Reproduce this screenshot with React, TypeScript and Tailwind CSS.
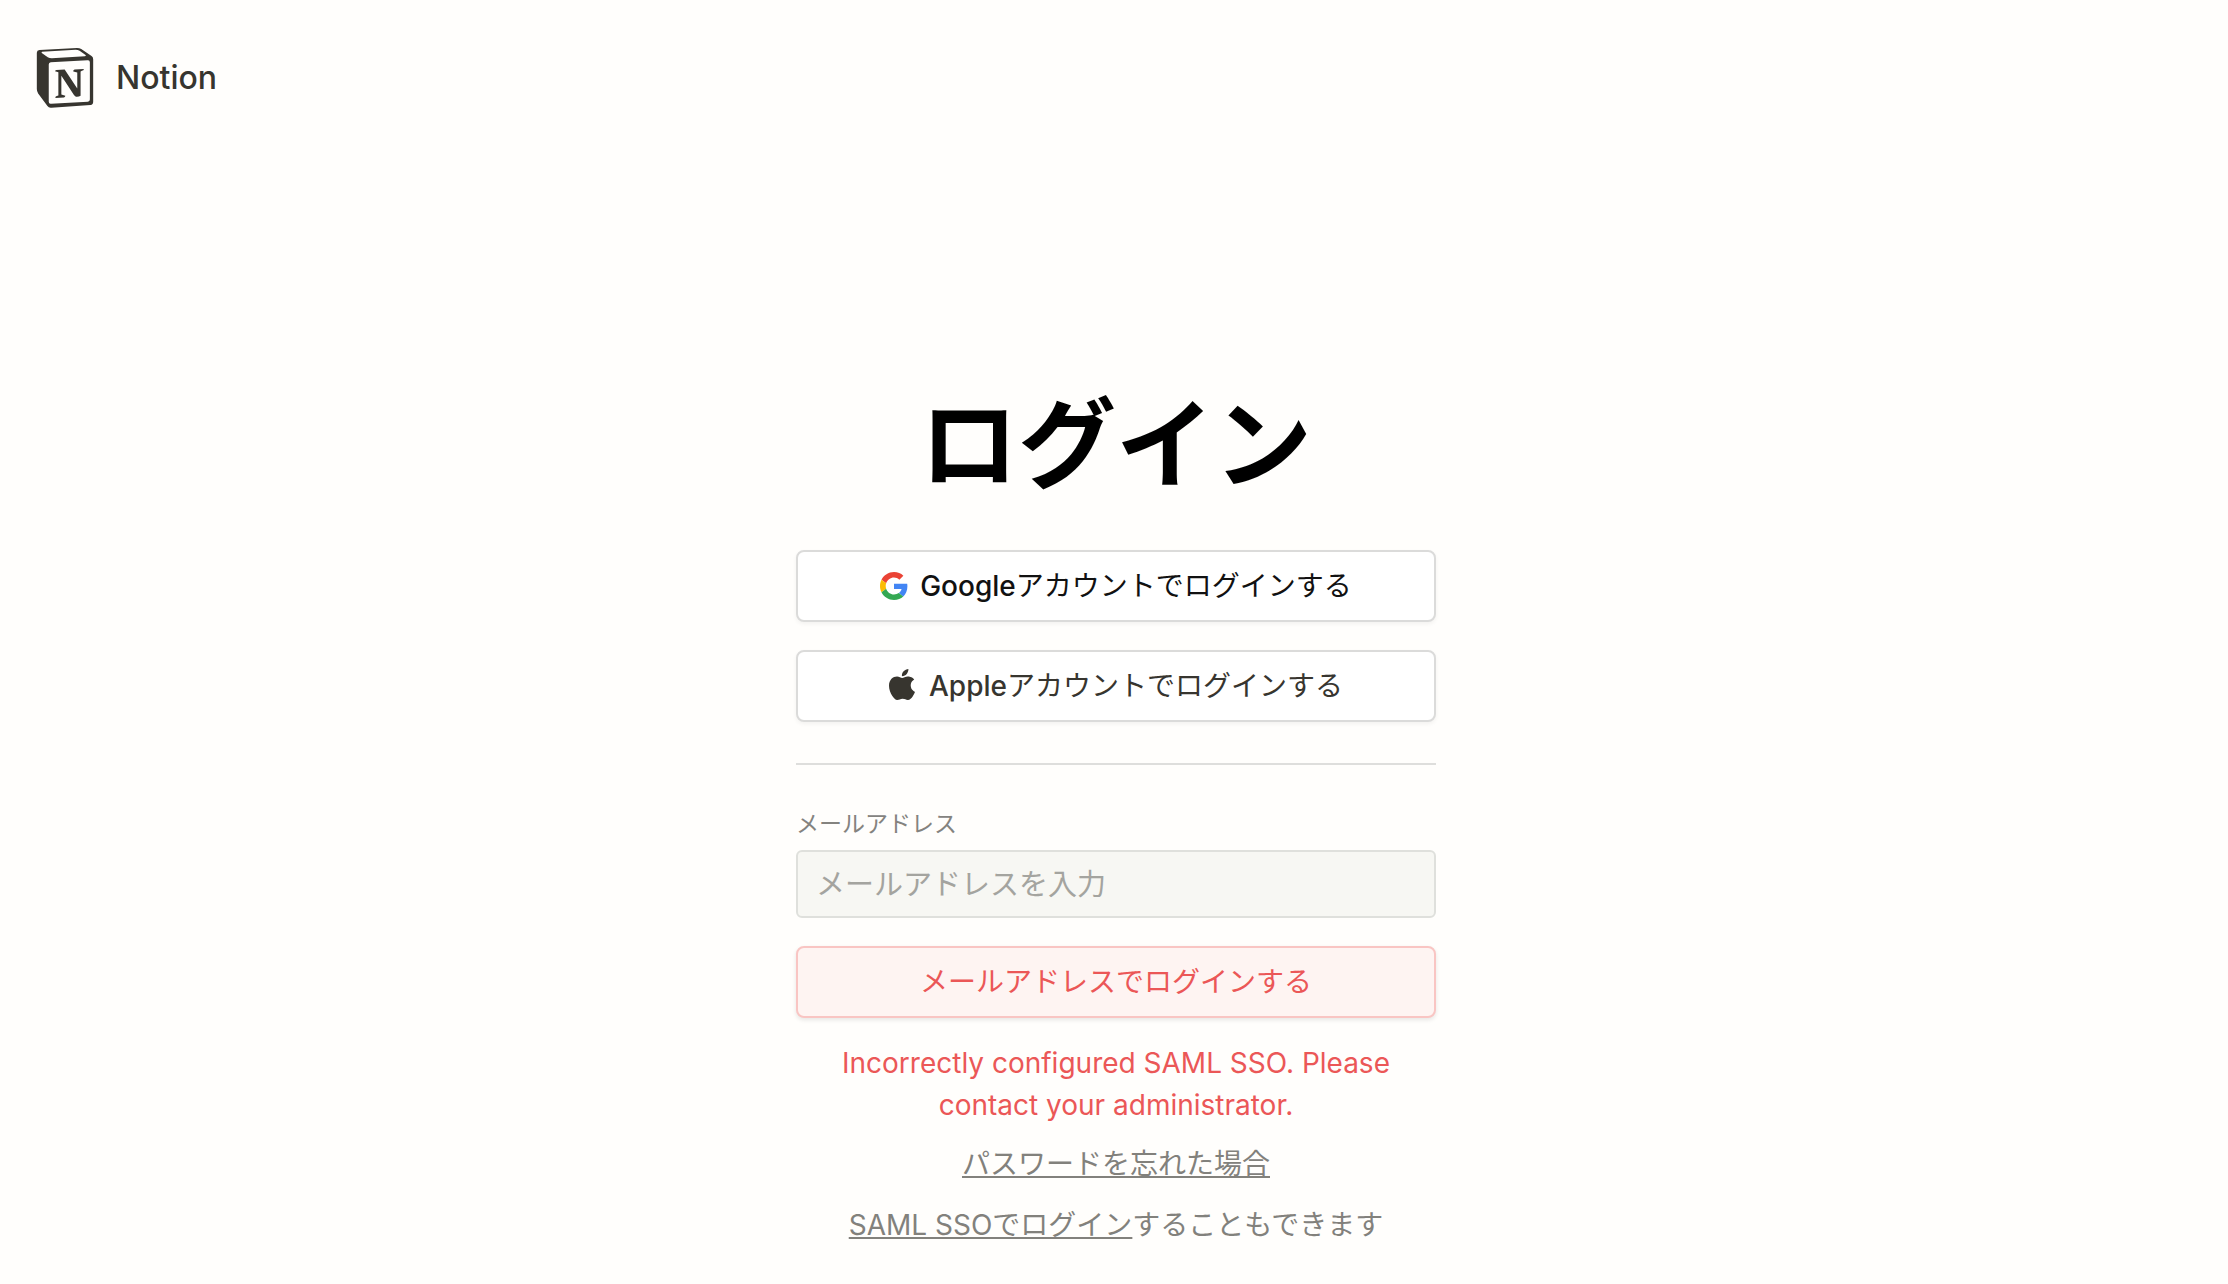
import React from "react";

function NotionLogo() {
  return (
    <svg viewBox="16 16 172 181" className="h-[60px] w-[58px]" aria-hidden="true">
      <path
        fill="#37352f"
        d="M17 30Q17 23 25 22L138 16Q146 16 151 19L182 40Q187 43 187 50V178Q187 187 179 188L61 196Q53 197 49 191L21 153Q17 147 17 140Z"
      />
      <path fill="#fffefc" d="M33 27L134 21Q141 21 146 24L164 37Q167 40 162 41L62 47Q55 47 50 44L32 31Q30 28 33 27Z" />
      <path fill="#fffefc" d="M53 66Q53 60 59 59L170 53Q177 52 177 59V171Q177 177 171 178L60 184Q53 185 53 178Z" />
      <path
        fill="#37352f"
        d="M72 86Q72 83 76 82L101 81L139 138V90L127 87Q126 82 131 81L159 79Q159 84 153 85L149 87V160Q143 164 135 163Q132 162 129 158L91 100V156L103 160Q103 164 99 165L73 167Q72 163 77 161L82 159V89Z"
      />
    </svg>
  );
}

function GoogleIcon() {
  return (
    <svg viewBox="0 0 48 48" className="size-7" aria-hidden="true">
      <path fill="#EA4335" d="M24 9.5c3.54 0 6.71 1.22 9.21 3.6l6.85-6.85C35.9 2.38 30.47 0 24 0 14.62 0 6.51 5.38 2.56 13.22l7.98 6.19C12.43 13.72 17.74 9.5 24 9.5z" />
      <path fill="#4285F4" d="M46.98 24.55c0-1.57-.15-3.09-.38-4.55H24v9.02h12.94c-.58 2.96-2.26 5.48-4.78 7.18l7.73 6c4.51-4.18 7.09-10.36 7.09-17.65z" />
      <path fill="#FBBC05" d="M10.53 28.59c-.48-1.45-.76-2.99-.76-4.59s.27-3.14.76-4.59l-7.98-6.19C.92 16.46 0 20.12 0 24c0 3.88.92 7.54 2.56 10.78l7.97-6.19z" />
      <path fill="#34A853" d="M24 48c6.48 0 11.93-2.13 15.89-5.81l-7.73-6c-2.15 1.45-4.92 2.3-8.16 2.3-6.26 0-11.57-4.22-13.47-9.91l-7.98 6.19C6.51 42.62 14.62 48 24 48z" />
    </svg>
  );
}

function AppleIcon() {
  return (
    <svg viewBox="0 0 814 1000" preserveAspectRatio="none" className="mb-1 h-[31px] w-[26px]" fill="#37352f" aria-hidden="true">
      <path d="M788.1 340.9c-5.8 4.5-108.2 62.2-108.2 190.5 0 148.4 130.3 200.9 134.2 202.2-.6 3.2-20.7 71.9-68.7 141.9-42.8 61.6-87.5 123.1-155.5 123.1s-85.5-39.5-164-39.5c-76.500 0-103.700 40.800-165.900 40.800s-105.600-57-155.500-127C46.700 790.700 0 663 0 541.800c0-194.400 126.400-297.500 250.800-297.500 66.100 0 121.200 43.400 162.700 43.400 39.500 0 101.100-46 176.300-46 28.500 0 130.900 2.600 198.300 99.200zm-234-181.500c31.100-36.900 53.100-88.100 53.100-139.300 0-7.100-.6-14.300-1.900-20.100-50.600 1.900-110.800 33.700-147.100 75.800-28.500 32.400-55.100 83.600-55.100 135.500 0 7.800 1.300 15.600 1.900 18.100 3.200.6 8.400 1.300 13.600 1.300 45.400 0 102.500-30.400 135.500-71.300z" />
    </svg>
  );
}

export default function App() {
  return (
    <div
      lang="ja"
      className="min-h-screen bg-[#fffefc] font-['Inter','Noto_Sans_CJK_JP',sans-serif] text-[28px] leading-[42px] text-[#37352f]"
    >
      <header className="flex h-[156px] items-center px-9">
        <a href="#home" className="flex items-center gap-[22px] text-[32px] font-medium">
          <NotionLogo />
          Notion
        </a>
      </header>

      <div className="pt-56 pl-1">
        <main className="mx-auto w-full max-w-[640px]">
          <h1 className="mb-10 text-center text-[98px] leading-[130px] font-bold text-black">ログイン</h1>

          <div className="flex flex-col gap-7">
            <button type="button" className="flex h-[72px] items-center justify-center gap-3 rounded-lg border-2 border-[#dbdbda] bg-white text-[#111] shadow-[0_2px_4px_rgba(15,15,15,0.05)]">
              <GoogleIcon />
              <span><span className="font-medium">Google</span>アカウントでログインする</span>
            </button>
            <button type="button" className="flex h-[72px] items-center justify-center gap-3.5 rounded-lg border-2 border-[#dbdbda] bg-white shadow-[0_2px_4px_rgba(15,15,15,0.05)]">
              <AppleIcon />
              <span><span className="font-medium">Apple</span>アカウントでログインする</span>
            </button>
          </div>

          <hr className="mt-[41px] mb-[41px] border-t-2 border-[#dededc]" />

          <form className="flex flex-col">
            <label htmlFor="email" className="mb-2 text-[23px] leading-9 text-[#84837f]">
              メールアドレス
            </label>
            <input
              id="email"
              type="email"
              placeholder="メールアドレスを入力"
              className="h-[68px] rounded-md border-2 border-[#dfe0dc] bg-[#f7f7f3] px-[18px] text-[29px] outline-none placeholder:text-[#a4a49f]"
            />
            <button type="button" className="mt-7 h-[72px] rounded-lg border-2 border-[#f9c5c3] bg-[#fef4f2] text-[#eb5757] shadow-[0_2px_4px_rgba(15,15,15,0.1)]">
              メールアドレスでログインする
            </button>
          </form>

          <p className="mx-auto mt-6 max-w-[560px] text-center text-[#eb5757]">
            Incorrectly configured SAML SSO. Please contact your administrator.
          </p>
          <p className="mt-[17px] text-center text-[#82817c]">
            <a href="#forgot" className="underline decoration-2 underline-offset-2">パスワードを忘れた場合</a>
          </p>
          <p className="mt-[19px] text-center text-[#82817c]">
            <a href="#saml" className="underline decoration-2 underline-offset-2">SAML SSOでログイン</a>
            することもできます
          </p>
        </main>
      </div>
    </div>
  );
}
